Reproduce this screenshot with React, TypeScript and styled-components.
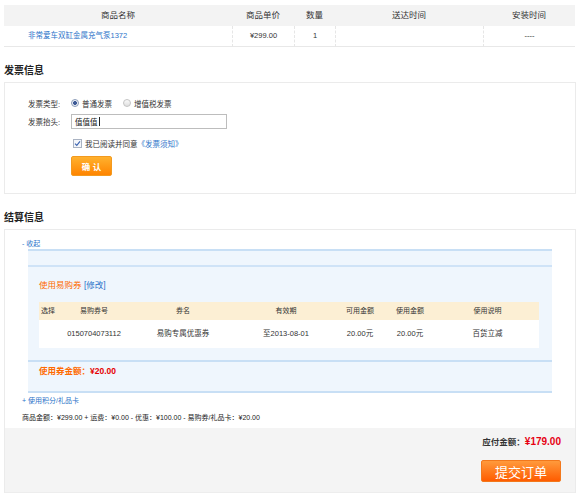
import styled, { createGlobalStyle } from "styled-components";

const GlobalStyle = createGlobalStyle`
  body {
    margin: 0;
    background: #ffffff;
    font-family: "Liberation Sans", "Noto Sans CJK SC", sans-serif;
    color: #333333;
  }
`;

const goodsCols = "228px 62px 41px 148px 92px";
const couponCols = "19px 72px 106px 100px 48px 52px 103px";

const coupons = [
  {
    no: "0150704073112",
    name: "易购专属优惠券",
    date: "至2013-08-01",
    usable: "20.00元",
    used: "20.00元",
    note: "百货立减",
  },
];

export default function App() {
  return (
    <Page>
      <GlobalStyle />
      <GoodsGrid>
        <HeadCell>商品名称</HeadCell>
        <HeadCell>商品单价</HeadCell>
        <HeadCell>数量</HeadCell>
        <HeadCell>送达时间</HeadCell>
        <HeadCell>安装时间</HeadCell>
        <BodyCell $left>
          <LinkText>非常爱车双缸金属充气泵1372</LinkText>
        </BodyCell>
        <BodyCell $sep>¥299.00</BodyCell>
        <BodyCell $sep>1</BodyCell>
        <BodyCell $sep />
        <BodyCell $sep>----</BodyCell>
      </GoodsGrid>

      <SectionTitle>发票信息</SectionTitle>
      <InvoiceBox>
        <FormRow>
          <Label>发票类型:</Label>
          <Radio $checked />
          <OptionText $space>普通发票</OptionText>
          <Radio />
          <OptionText>增值税发票</OptionText>
        </FormRow>
        <FormRow $gap={4}>
          <Label>发票抬头:</Label>
          <TextBox>
            值值值<Caret />
          </TextBox>
        </FormRow>
        <FormRow $gap={7} $indent>
          <CheckBox>
            <svg width="7" height="7" viewBox="0 0 7 7">
              <path d="M1 3.6 L2.8 5.4 L6 1.4" fill="none" stroke="#3a62b0" strokeWidth="1.1" />
            </svg>
          </CheckBox>
          <OptionText>我已阅读并同意</OptionText>
          <LinkText>《发票须知》</LinkText>
        </FormRow>
        <FormRow $gap={6} $indent>
          <ConfirmButton>确 认</ConfirmButton>
        </FormRow>
      </InvoiceBox>

      <SectionTitle>结算信息</SectionTitle>
      <SettleBox>
        <Toggle>- 收起</Toggle>
        <CouponPanel>
          <PanelStrip />
          <CouponBody>
            <CouponTitle>
              使用易购券 <LinkText>[修改]</LinkText>
            </CouponTitle>
            <CouponGrid>
              <CouponHead $left>选择</CouponHead>
              <CouponHead>易购券号</CouponHead>
              <CouponHead>券名</CouponHead>
              <CouponHead>有效期</CouponHead>
              <CouponHead>可用金额</CouponHead>
              <CouponHead>使用金额</CouponHead>
              <CouponHead>使用说明</CouponHead>
              {coupons.map((c) => (
                <CouponRow key={c.no}>
                  <CouponCell />
                  <CouponCell>{c.no}</CouponCell>
                  <CouponCell>{c.name}</CouponCell>
                  <CouponCell>{c.date}</CouponCell>
                  <CouponCell>{c.usable}</CouponCell>
                  <CouponCell>{c.used}</CouponCell>
                  <CouponCell>{c.note}</CouponCell>
                </CouponRow>
              ))}
            </CouponGrid>
          </CouponBody>
          <CouponTotal>
            使用券金额：<Red>¥20.00</Red>
          </CouponTotal>
        </CouponPanel>
        <Toggle $gap={3}>+ 使用积分/礼品卡</Toggle>
        <Summary>
          商品金额：¥299.00 + 运费：¥0.00 - 优惠：¥100.00 - 易购券/礼品卡：¥20.00
        </Summary>
        <PayBar>
          <PayAmount>
            应付金额：<BigRed>¥179.00</BigRed>
          </PayAmount>
          <SubmitButton>提交订单</SubmitButton>
        </PayBar>
      </SettleBox>
    </Page>
  );
}

const Page = styled.div`
  width: 572px;
  padding: 5px 4px 8px 4px;
`;

const GoodsGrid = styled.div`
  display: grid;
  grid-template-columns: ${goodsCols};
  width: 571px;
`;

const HeadCell = styled.div`
  height: 21px;
  line-height: 21px;
  background: #f3f3f3;
  text-align: center;
  font-size: 8.5px;
  color: #333;
`;

const BodyCell = styled.div<{ $left?: boolean; $sep?: boolean }>`
  height: 20px;
  line-height: 20px;
  font-size: 7.5px;
  color: #333;
  text-align: ${(p) => (p.$left ? "left" : "center")};
  padding-left: ${(p) => (p.$left ? "24px" : "0")};
  border-bottom: 1px solid #e8e8e8;
  border-left: ${(p) => (p.$sep ? "1px dashed #e6e6e6" : "none")};
`;

const LinkText = styled.span`
  color: #2b73c9;
`;

const SectionTitle = styled.div`
  font-size: 10px;
  line-height: 12px;
  font-weight: bold;
  color: #222;
  margin: 18px 0 5px 0;
`;

const InvoiceBox = styled.div`
  width: 570px;
  height: 97px;
  border: 1px solid #ebebeb;
  padding: 13px 0 0 0;
`;

const FormRow = styled.div<{ $gap?: number; $indent?: boolean }>`
  display: flex;
  align-items: center;
  margin-top: ${(p) => p.$gap ?? 0}px;
  padding-left: ${(p) => (p.$indent ? "66px" : "23px")};
  font-size: 7.5px;
  min-height: 14px;
`;

const Label = styled.span`
  width: 43px;
  color: #333;
`;

const Radio = styled.span<{ $checked?: boolean }>`
  width: 6px;
  height: 6px;
  border-radius: 50%;
  border: 1px solid ${(p) => (p.$checked ? "#8a9bb8" : "#c4c4c4")};
  background: ${(p) =>
    p.$checked
      ? "radial-gradient(circle, #3d5a96 0 1.8px, #eef2f8 2.2px)"
      : "linear-gradient(#fafafa, #dedede)"};
  margin: 0 3px 0 0;
`;

const OptionText = styled.span<{ $space?: boolean }>`
  color: #333;
  margin-right: ${(p) => (p.$space ? "11px" : "0")};
`;

const TextBox = styled.div`
  width: 151px;
  height: 13px;
  border: 1px solid #bdbdbd;
  padding-left: 3px;
  display: flex;
  align-items: center;
  font-size: 7.5px;
  color: #222;
`;

const Caret = styled.span`
  width: 1px;
  height: 9px;
  background: #222;
  margin-left: 1px;
`;

const CheckBox = styled.span`
  width: 7px;
  height: 7px;
  border: 1px solid #aab3c2;
  background: #f4f6fa;
  display: flex;
  align-items: center;
  justify-content: center;
  margin: 0 3px 0 2px;
`;

const ConfirmButton = styled.button`
  width: 41px;
  height: 20px;
  border: 1px solid #f39a1f;
  border-radius: 2px;
  background: linear-gradient(#ffb12e, #ff8400);
  color: #fff;
  font-family: inherit;
  font-size: 8.5px;
  font-weight: bold;
  padding: 0;
  cursor: pointer;
`;

const SettleBox = styled.div`
  width: 570px;
  border: 1px solid #ebebeb;
  border-bottom: none;
`;

const Toggle = styled.div<{ $gap?: number }>`
  font-size: 7px;
  line-height: 10px;
  color: #2b73c9;
  padding: ${(p) => (p.$gap === undefined ? "9px" : `${p.$gap}px`)} 0 0 17px;
`;

const CouponPanel = styled.div`
  margin-left: 23px;
  width: 524px;
  background: #eff6fd;
  border-top: 2px solid #c8dff5;
  border-bottom: 2px solid #c8dff5;
`;

const PanelStrip = styled.div`
  height: 14px;
  border-bottom: 2px solid #cfe3f7;
`;

const CouponBody = styled.div`
  padding: 13px 13px 12px 11px;
  border-bottom: 2px solid #c8dff5;
`;

const CouponTitle = styled.div`
  font-size: 8.5px;
  line-height: 10px;
  color: #ff6a00;
  margin-bottom: 12px;
`;

const CouponGrid = styled.div`
  display: grid;
  grid-template-columns: ${couponCols};
  width: 500px;
`;

const CouponHead = styled.div<{ $left?: boolean }>`
  height: 18px;
  line-height: 18px;
  background: #fcefd4;
  font-size: 7px;
  color: #333;
  text-align: ${(p) => (p.$left ? "left" : "center")};
  padding-left: ${(p) => (p.$left ? "2px" : "0")};
`;

const CouponRow = styled.div`
  display: contents;
`;

const CouponCell = styled.div`
  height: 28px;
  line-height: 28px;
  background: #fff;
  font-size: 7.5px;
  color: #333;
  text-align: center;
`;

const CouponTotal = styled.div`
  font-size: 8.5px;
  line-height: 10px;
  font-weight: bold;
  color: #ff6a00;
  padding: 4px 0 15px 11px;
`;

const Red = styled.span`
  color: #e60000;
`;

const Summary = styled.div`
  font-size: 7px;
  line-height: 10px;
  color: #222;
  padding: 7px 0 5px 17px;
`;

const PayBar = styled.div`
  background: #f4f4f4;
  border-bottom: 1px solid #ededed;
  display: flex;
  flex-direction: column;
  align-items: flex-end;
  padding: 8px 14px 10px 0;
`;

const PayAmount = styled.div`
  font-size: 8.5px;
  line-height: 12px;
  font-weight: bold;
  color: #333;
`;

const BigRed = styled.span`
  font-size: 10px;
  color: #e60012;
`;

const SubmitButton = styled.button`
  margin-top: 12px;
  width: 80px;
  height: 22px;
  border: 1px solid #f2781c;
  border-radius: 2px;
  background: linear-gradient(#ff9a3c, #ff5c00);
  color: #fff;
  font-family: inherit;
  font-size: 13px;
  padding: 0;
  cursor: pointer;
`;
